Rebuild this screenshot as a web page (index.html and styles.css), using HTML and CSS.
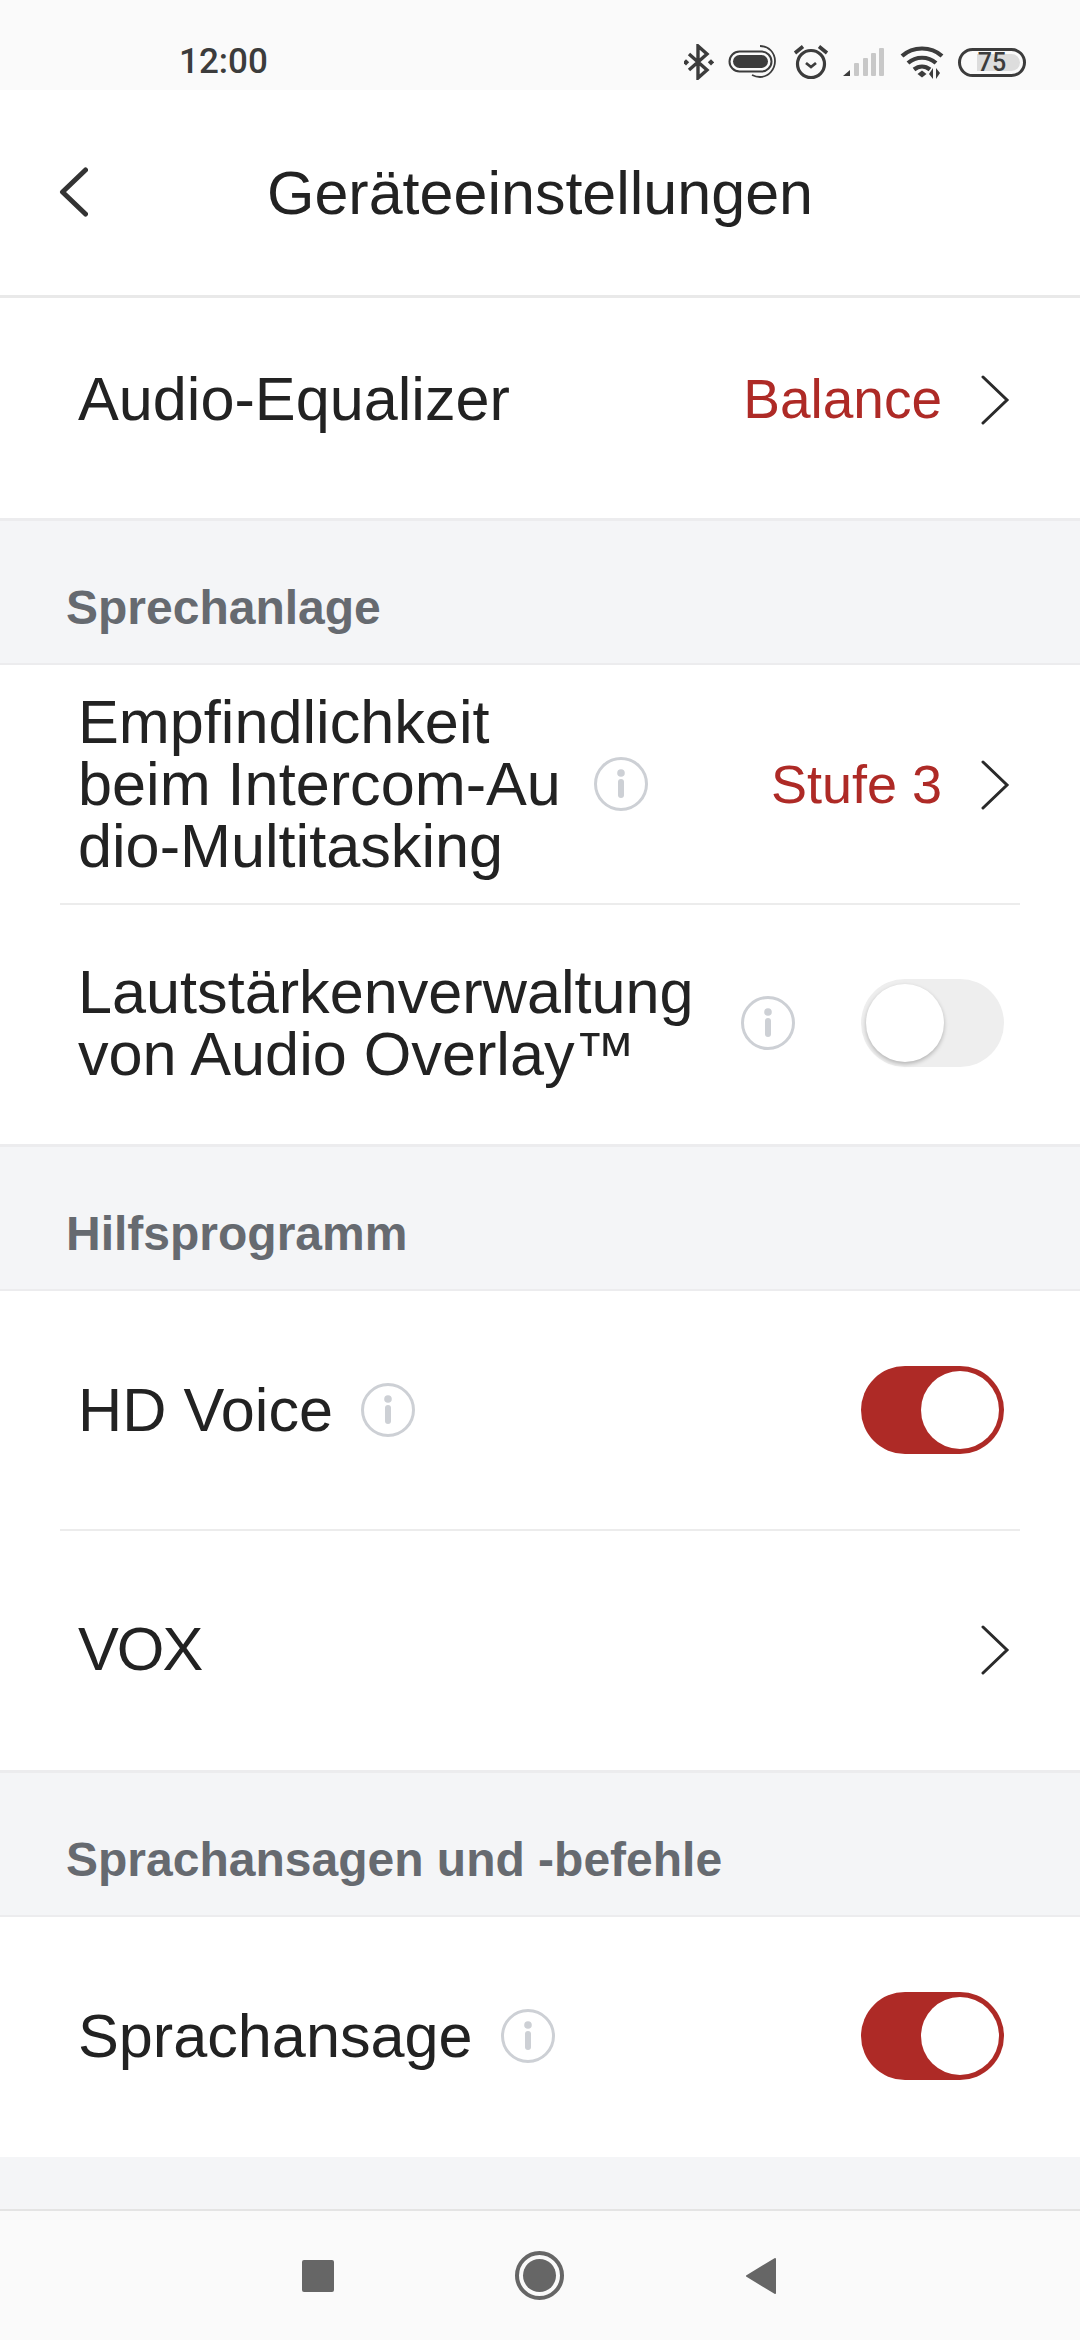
FILE: index.html
```html
<!DOCTYPE html>
<html lang="de">
<head>
  <meta charset="UTF-8" />
  <title>Geräteeinstellungen</title>
  <link rel="stylesheet" href="styles.css">
</head>
<body>

  <div class="status-bar">
    <span class="time">12:00</span>
    <div class="status-icons">
      <svg class="ic-bt" width="30" height="36" viewBox="0 0 30 36">
        <path d="M5 10l18 16-9 8V2l9 8L5 26" fill="none" stroke="#3c3c3c" stroke-width="3.4"/>
        <rect x="0" y="16" width="4.5" height="4.5" transform="rotate(45 2 18)" fill="#3c3c3c"/>
        <rect x="25" y="16" width="4.5" height="4.5" transform="rotate(45 27 18)" fill="#3c3c3c"/>
      </svg>
      <svg class="ic-link" width="50" height="36" viewBox="0 0 50 36">
        <rect x="1.5" y="7.5" width="42" height="20" rx="10" fill="none" stroke="#3c3c3c" stroke-width="2"/>
        <rect x="5" y="11" width="35" height="13" rx="6.5" fill="#3c3c3c"/>
        <path d="M32 2c9 0 15 7 15 15s-6 16-15 16c-3 0-6-1-8-2" fill="none" stroke="#3c3c3c" stroke-width="1.8"/>
      </svg>
      <svg class="ic-alarm" width="36" height="36" viewBox="0 0 36 36">
        <circle cx="18" cy="20" r="13.5" fill="none" stroke="#3c3c3c" stroke-width="3.2"/>
        <path d="M13 19l5 4 5-4" fill="none" stroke="#3c3c3c" stroke-width="2.8"/>
        <path d="M2 9l8-6.500M34 9l-8-6.500" fill="none" stroke="#3c3c3c" stroke-width="3.6"/>
      </svg>
      <svg class="ic-signal" width="42" height="30" viewBox="0 0 42 30">
        <path d="M0 29l7-6v6z" fill="#3c3c3c"/>
        <rect x="11" y="16" width="5" height="13" rx="1" fill="#c8c8c8"/>
        <rect x="20" y="11" width="5" height="18" rx="1" fill="#c8c8c8"/>
        <rect x="28" y="6" width="5" height="23" rx="1" fill="#c8c8c8"/>
        <rect x="36" y="1" width="5" height="28" rx="1" fill="#c8c8c8"/>
      </svg>
      <svg class="ic-wifi" width="44" height="34" viewBox="0 0 44 34">
        <path d="M2 11c11-10 29-10 40 0M8 18c8-7 20-7 28 0M14 24.500c5-4 11-4 16 0" fill="none" stroke="#3c3c3c" stroke-width="4.200"/>
        <path d="M17.500 29l4.500-3.500 4.500 3.500-4.500 3.500z" fill="#3c3c3c"/>
        <path d="M33 23v11l-4-5zM36 23v11l4-6z" fill="#3c3c3c"/>
      </svg>
      <div class="battery"><span class="battery-fill"></span><span class="battery-num">75</span></div>
    </div>
  </div>

  <div class="header">
    <svg class="back" width="30" height="50" viewBox="0 0 30 50">
      <path d="M27.500 3L4.500 25l23 22" fill="none" stroke="#333" stroke-width="5" stroke-linecap="round" stroke-linejoin="round"/>
    </svg>
    <h1>Geräteeinstellungen</h1>
  </div>

  <div class="group">
    <div class="row row-first">
      <div class="label">Audio-Equalizer</div>
      <div class="value">Balance</div>
      <svg class="chevron" width="30" height="50" viewBox="0 0 30 50"><path d="M3 2l24 23L3 48" /></svg>
    </div>
  </div>

  <div class="section-title">Sprechanlage</div>
  <div class="group">
    <div class="row sep">
      <div class="label">Empfindlichkeit<br>beim Intercom-Au<br>dio-Multitasking</div>
      <svg class="info info-a" width="54" height="54" viewBox="0 0 54 54"><circle cx="27" cy="27" r="25.500"/><circle class="dot" cx="27" cy="16" r="3.800"/><path d="M27 25v13"/></svg>
      <div class="value value-level">Stufe 3</div>
      <svg class="chevron" width="30" height="50" viewBox="0 0 30 50"><path d="M3 2l24 23L3 48" /></svg>
    </div>
    <div class="row">
      <div class="label">Lautstärkenverwaltung<br>von Audio Overlay™</div>
      <svg class="info info-b" width="54" height="54" viewBox="0 0 54 54"><circle cx="27" cy="27" r="25.500"/><circle class="dot" cx="27" cy="16" r="3.800"/><path d="M27 25v13"/></svg>
      <div class="toggle"><span class="knob"></span></div>
    </div>
  </div>

  <div class="section-title">Hilfsprogramm</div>
  <div class="group">
    <div class="row sep">
      <div class="label">HD Voice</div>
      <svg class="info" width="54" height="54" viewBox="0 0 54 54"><circle cx="27" cy="27" r="25.500"/><circle class="dot" cx="27" cy="16" r="3.800"/><path d="M27 25v13"/></svg>
      <div class="toggle on"><span class="knob"></span></div>
    </div>
    <div class="row">
      <div class="label label-vox">VOX</div>
      <svg class="chevron chevron-only" width="30" height="50" viewBox="0 0 30 50"><path d="M3 2l24 23L3 48" /></svg>
    </div>
  </div>

  <div class="section-title">Sprachansagen und -befehle</div>
  <div class="group">
    <div class="row">
      <div class="label">Sprachansage</div>
      <svg class="info" width="54" height="54" viewBox="0 0 54 54"><circle cx="27" cy="27" r="25.500"/><circle class="dot" cx="27" cy="16" r="3.800"/><path d="M27 25v13"/></svg>
      <div class="toggle on"><span class="knob"></span></div>
    </div>
  </div>

  <div class="filler"></div>

  <div class="nav-bar">
    <span class="nav-square"></span>
    <span class="nav-home"><span class="nav-home-dot"></span></span>
    <svg class="nav-back" width="32" height="38" viewBox="0 0 32 38"><path d="M30 2L2 19l28 17z" fill="#666" stroke="#666" stroke-width="2" stroke-linejoin="round"/></svg>
  </div>

</body>
</html>
```
FILE: styles.css
```css
* {
  box-sizing: border-box;
}
body {
  margin: 0;
  width: 1080px;
  height: 2340px;
  display: flex;
  flex-direction: column;
  font-family: 'Liberation Sans', Arial, sans-serif;
  background: #f4f5f7;
  color: #222;
  overflow: hidden;
}
.status-bar {
  height: 90px;
  background: #fafafa;
  display: flex;
  justify-content: space-between;
  align-items: flex-end;
  padding: 0 54px 10px 179px;
}
.time {
  font-family: Roboto, sans-serif;
  font-weight: 500;
  font-size: 35px;
  line-height: 36px;
  color: #3c3c3c;
}
.status-icons {
  display: flex;
  align-items: center;
  gap: 14.5px;
}
.battery {
  position: relative;
  width: 68px;
  height: 29px;
  border: 3.500px solid #3c3c3c;
  border-radius: 15px;
  display: flex;
  align-items: center;
  justify-content: center;
}
.battery-fill {
  position: absolute;
  left: 16px;
  top: 3px;
  bottom: 3px;
  right: 3px;
  background: #ddd;
  border-radius: 0 9px 9px 0;
}
.battery-num {
  position: relative;
  font-family: Roboto, sans-serif;
  font-weight: 500;
  font-size: 25px;
  color: #3c3c3c;
}
.header {
  position: relative;
  height: 208px;
  background: white;
  border-bottom: 3px solid #e9e9e9;
  display: flex;
  align-items: center;
  justify-content: center;
}
.back {
  position: absolute;
  left: 58px;
  top: 77px;
}
h1 {
  margin: 0;
  font-weight: 400;
  font-size: 61px;
}
.group {
  background: white;
}
.row {
  height: 239.5px;
  margin: 0 60px;
  padding-left: 18px;
  display: flex;
  align-items: center;
  border-bottom: 2px solid transparent;
}
.row-first {
  height: 220px;
  padding-bottom: 16px;
}
.sep {
  border-bottom-color: #ececec;
}
.label {
  font-size: 61.2px;
  line-height: 62px;
}
.label-vox {
  letter-spacing: -2px;
}
.info {
  margin-left: 28px;
  flex: none;
  fill: none;
  stroke: #cdd0d5;
  stroke-width: 3;
}
.info path {
  stroke-width: 6;
  stroke-linecap: round;
}
.info .dot {
  fill: #cdd0d5;
  stroke: none;
}
.info-a {
  margin-left: 33px;
}
.info-b {
  margin-left: 47px;
}
.value {
  margin-left: auto;
  font-size: 55px;
  color: #ae2a26;
}
.value-level {
  font-size: 54px;
}
.chevron {
  margin: 2px 10px 0 38px;
  flex: none;
  fill: none;
  stroke: #2a2a2a;
  stroke-width: 3;
  stroke-linecap: round;
}
.chevron-only {
  margin-left: auto;
}
.toggle {
  position: relative;
  margin-left: auto;
  margin-right: 16px;
  width: 143px;
  height: 88px;
  border-radius: 44px;
  background: #eee;
  flex: none;
}
.knob {
  position: absolute;
  left: 5px;
  top: 5px;
  width: 78px;
  height: 78px;
  border-radius: 50%;
  background: white;
  box-shadow: 0 2px 4px rgba(0,0,0,0.25);
}
.toggle.on {
  background: #ae2a26;
}
.toggle.on .knob {
  left: 60px;
  box-shadow: none;
}
.section-title {
  height: 147px;
  padding: 0 66px 28px;
  display: flex;
  align-items: flex-end;
  font-size: 48px;
  font-weight: bold;
  color: #666a70;
  border-top: 3px solid #ececee;
  border-bottom: 2px solid #ececee;
}
.filler {
  flex: 1;
  border-bottom: 2px solid #e4e4e4;
}
.nav-bar {
  height: 129px;
  background: #fafafa;
  display: flex;
  align-items: center;
  justify-content: center;
  gap: 181px;
  padding-right: 2px;
}
.nav-square {
  width: 32px;
  height: 32px;
  border-radius: 2px;
  background: #666;
}
.nav-home {
  width: 49px;
  height: 49px;
  border-radius: 50%;
  border: 4px solid #666;
  padding: 4px;
  background: #fafafa;
}
.nav-home-dot {
  display: block;
  width: 100%;
  height: 100%;
  border-radius: 50%;
  background: #666;
}
```
